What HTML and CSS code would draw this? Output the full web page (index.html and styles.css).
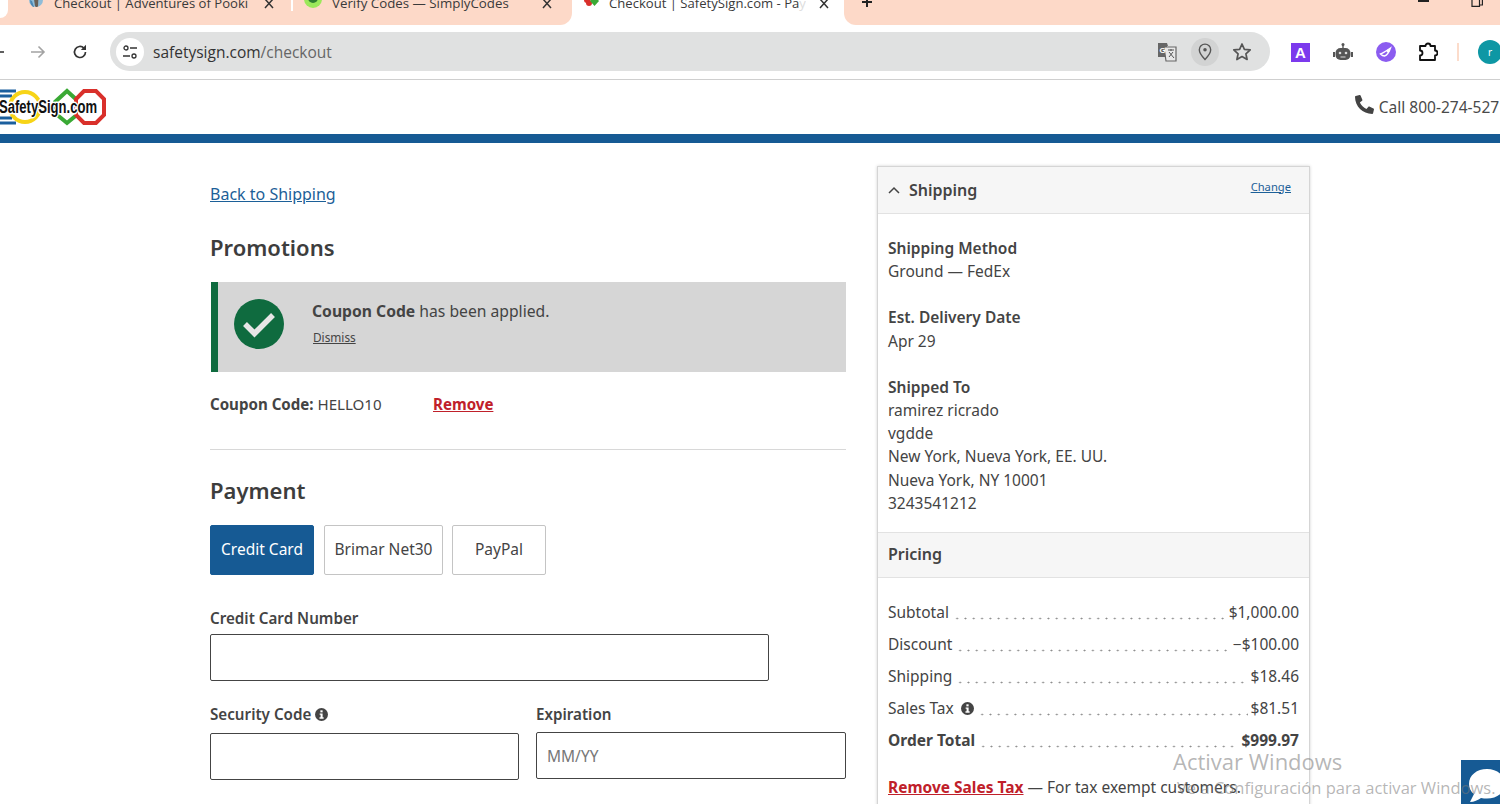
FILE: index.html
```html
<!DOCTYPE html>
<html lang="es">
<head>
<meta charset="utf-8">
<title>Checkout | SafetySign.com</title>
<link rel="stylesheet" href="styles.css">
</head>
<body>
<div class="tabstrip">
  <div class="tabgroup">
    <div class="tab tab-one">
      <svg class="fav" viewBox="0 0 16 16"><circle cx="8" cy="4" r="7" fill="#8fbcd8"/><path d="M5.500 0h5l-.5 10-.7 1H8l-1-1z" fill="#6a5f55"/><path d="M2 4c0 4 2 6 3 7h1L4 5z" fill="#4b87b3"/></svg>
      <span class="tab-title">Checkout | Adventures of Pooki</span>
      <svg class="tabx" viewBox="0 0 10 10"><path d="M1 0l8 9M9 0L1 9" stroke="#333" stroke-width="1.500"/></svg>
    </div>
    <i class="tabsep"></i>
    <div class="tab tab-two">
      <svg class="fav fav-big" viewBox="0 0 18 18"><circle cx="9" cy="4" r="9" fill="#9be85a"/><circle cx="9" cy="3" r="5" fill="#2e7d32"/><circle cx="9" cy="3" r="2" fill="#9be85a"/></svg>
      <span class="tab-title">Verify Codes — SimplyCodes</span>
      <svg class="tabx" viewBox="0 0 10 10"><path d="M1 0l8 9M9 0L1 9" stroke="#333" stroke-width="1.500"/></svg>
    </div>
  </div>
  <div class="tab tab-active">
    <svg class="fav" viewBox="0 0 16 16"><circle cx="4" cy="4" r="3" fill="#d9302b"/><circle cx="6" cy="7" r="3" fill="#d9302b"/><path d="M11.500 0l4.500 5-4.500 5L7 5z" fill="#3aa935"/></svg>
    <span class="tab-title">Checkout | SafetySign.com - Pa<span class="fade">y</span></span>
    <svg class="tabx" viewBox="0 0 10 10"><path d="M1 0l8 9M9 0L1 9" stroke="#333" stroke-width="1.500"/></svg>
  </div>
  <div class="tabrest">
    <svg class="newtab" viewBox="0 0 12 12"><path d="M6 0v10M1 5h10" stroke="#222" stroke-width="2"/></svg>
    <div class="winctl">
      <i class="minbar"></i>
      <svg class="restore" viewBox="0 0 12 7"><path d="M1 0v6.400h7.500V0M8.500 5H11.400V0" fill="none" stroke="#222" stroke-width="1.200"/></svg>
    </div>
  </div>
</div>

<div class="toolbar">
  <svg class="nav nav-back" viewBox="0 0 16 16"><path d="M0 8h14" stroke="#444" stroke-width="1.700"/></svg>
  <svg class="nav nav-fwd" viewBox="0 0 16 16"><path d="M1 8h13M8.500 2.500L14 8l-5.500 5.500" fill="none" stroke="#a3a3a3" stroke-width="1.600"/></svg>
  <svg class="nav nav-reload" viewBox="0 0 16 16"><path d="M13.500 8a5.500 5.500 0 1 1-1.600-3.900" fill="none" stroke="#333" stroke-width="1.700"/><path d="M14 .8v5.200H8.800z" fill="#333"/></svg>
  <div class="omnibox">
    <span class="site-info">
      <svg viewBox="0 0 16 16" width="16" height="16"><circle cx="4" cy="4" r="2" fill="none" stroke="#333" stroke-width="1.300"/><path d="M8 4h7M1 12h7" stroke="#333" stroke-width="1.300"/><circle cx="12" cy="12" r="2" fill="none" stroke="#333" stroke-width="1.300"/></svg>
    </span>
    <span class="url">safetysign.com<span class="url-path">/checkout</span></span>
    <span class="omni-icons">
      <svg class="ic-translate" viewBox="0 0 20 20"><path d="M1 1h9l1 3h-1v11H1z" fill="#666"/><path d="M7 5h12v14H9z" fill="#e8e8e8" stroke="#666" stroke-width="1.200"/><text x="2.500" y="11" class="ic-g">G</text><path d="M11 8h6M14 7v2M12 15l4-5M12 10l5 6" stroke="#555" fill="none"/></svg>
      <span class="pin-wrap"><svg viewBox="0 0 16 20" width="14" height="18"><path d="M8 1a6.500 6.500 0 0 0-6.500 6.500C1.500 12 8 18.500 8 18.500S14.500 12 14.500 7.500A6.500 6.500 0 0 0 8 1z" fill="none" stroke="#555" stroke-width="1.600"/><circle cx="8" cy="7.500" r="2" fill="#555"/></svg></span>
      <svg class="ic-star" viewBox="0 0 20 20"><path d="M10 2l2.400 5.300 5.800.6-4.300 3.900 1.200 5.700L10 14.600l-5.100 2.900 1.200-5.700L1.800 7.900l5.800-.6z" fill="none" stroke="#555" stroke-width="1.700" stroke-linejoin="round"/></svg>
    </span>
  </div>
  <div class="extensions">
    <span class="ext-a">A</span>
    <svg class="ext" viewBox="0 0 20 20"><circle cx="10" cy="2.500" r="1.500" fill="#555"/><path d="M9.300 3h1.400v3H9.300z" fill="#555"/><rect x="2.500" y="6" width="15" height="12" rx="5" fill="#555"/><rect x="0" y="10" width="2" height="5" fill="#555"/><rect x="18" y="10" width="2" height="5" fill="#555"/><circle cx="7" cy="11" r="1.300" fill="#ddd"/><circle cx="13" cy="11" r="1.300" fill="#ddd"/><path d="M7.500 15h5" stroke="#ddd"/></svg>
    <svg class="ext" viewBox="0 0 20 20"><circle cx="10" cy="10" r="10" fill="#8b5cf0"/><path d="M4.500 12c3-1 7-4 10-6-1 3-3 7-6 8-2 0-3-1-4-2z" fill="none" stroke="#fff" stroke-width="1.400"/><circle cx="12" cy="9" r="1.500" fill="#fff"/></svg>
    <svg class="ext ext-puzzle" viewBox="0 0 20 20"><path d="M2 4h5.500a2.500 2.500 0 0 1 5 0H17v4.500a2.500 2.500 0 0 1 0 5V18H2v-4.500a2.500 2.500 0 0 0 0-5z" fill="none" stroke="#111" stroke-width="1.800" stroke-linejoin="round"/></svg>
    <i class="ext-sep"></i>
    <span class="avatar">r</span>
  </div>
</div>

<header class="site-header">
  <svg class="logo" viewBox="0 0 110 36" width="110" height="36">
    <path d="M-4 2h20M-4 7h16M-4 29h16M-4 34h20" stroke="#1b5f9e" stroke-width="3"/>
    <circle cx="25" cy="18" r="15" fill="#fff" stroke="#f7d417" stroke-width="4"/>
    <path d="M67 2L79 13V24L67 34L55 24V13Z" fill="#fff" stroke="#3aa935" stroke-width="4"/>
    <path d="M84 2h12l8 8v16l-8 8H84l-8-8V10z" fill="#fff" stroke="#d9302b" stroke-width="4"/>
    <text x="-1" y="23.500" class="logo-text" textLength="98" lengthAdjust="spacingAndGlyphs">SafetySign.com</text>
  </svg>
  <div class="call">
    <svg class="phone" viewBox="0 0 512 512" width="19" height="19"><path d="M493 24L389 0c-11-3-23 3-27 14l-48 112c-4 10-1 21 7 28l60 49c-36 77-99 140-177 177l-49-60c-7-8-18-11-28-7L15 361c-11 5-17 16-14 28l24 104c2 11 12 19 23 19 256 0 464-207 464-464 0-11-8-21-19-24z" fill="#444"/></svg>
    <span>Call 800-274-5271</span>
  </div>
</header>
<div class="blue-rule"></div>

<main class="checkout">
  <section class="main-col">
    <a class="back-link" href="#">Back to Shipping</a>
    <h2 class="section-title promo-title">Promotions</h2>
    <div class="alert">
      <svg class="alert-icon" viewBox="0 0 50 50" width="50" height="50"><circle cx="25" cy="25" r="25" fill="#0f6b3f"/><path d="M11 25l9.500 9.500L39 16" fill="none" stroke="#e6e6e6" stroke-width="5.500"/></svg>
      <div class="alert-body">
        <p class="alert-text"><b>Coupon Code</b> has been applied.</p>
        <a class="dismiss" href="#">Dismiss</a>
      </div>
    </div>
    <div class="coupon-row">
      <span class="coupon-value"><b>Coupon Code:</b> HELLO10</span>
      <a class="remove-link" href="#">Remove</a>
    </div>
    <hr class="divider">
    <h2 class="section-title pay-title">Payment</h2>
    <div class="pay-tabs">
      <button class="pay-btn pay-active">Credit Card</button>
      <button class="pay-btn pay-net">Brimar Net30</button>
      <button class="pay-btn pay-paypal">PayPal</button>
    </div>
    <label class="field-label card-label">Credit Card Number</label>
    <input class="field card-field" type="text">
    <div class="two-col">
      <div class="sec-col">
        <label class="field-label">Security Code <svg class="info" viewBox="0 0 14 14" width="13" height="13"><circle cx="7" cy="7" r="7" fill="#444"/><rect x="5.800" y="2.500" width="2.400" height="2.200" fill="#fff"/><path d="M5 6h3.200v4H9.300v1.500H4.800V10H6V7.400H5z" fill="#fff"/></svg></label>
        <input class="field sec-field" type="text">
      </div>
      <div class="exp-col">
        <label class="field-label">Expiration</label>
        <input class="field exp-field" type="text" placeholder="MM/YY">
      </div>
    </div>
  </section>

  <aside class="summary">
    <div class="panel-head ship-head">
      <svg class="chev" viewBox="0 0 12 8" width="12" height="8"><path d="M1 7l5-5 5 5" fill="none" stroke="#444" stroke-width="1.500"/></svg>
      <h3 class="panel-title">Shipping</h3>
      <a class="change" href="#">Change</a>
    </div>
    <div class="ship-body">
      <div class="ship-block"><b>Shipping Method</b><br>Ground — FedEx</div>
      <div class="ship-block"><b>Est. Delivery Date</b><br>Apr 29</div>
      <div class="ship-block"><b>Shipped To</b><br>ramirez ricrado<br>vgdde<br>New York, Nueva York, EE. UU.<br>Nueva York, NY 10001<br>3243541212</div>
    </div>
    <div class="panel-head price-head"><h3 class="panel-title">Pricing</h3></div>
    <div class="price-body">
      <div class="price-row"><span>Subtotal</span><i class="dots"></i><span>$1,000.00</span></div>
      <div class="price-row"><span>Discount</span><i class="dots"></i><span>−$100.00</span></div>
      <div class="price-row"><span>Shipping</span><i class="dots"></i><span>$18.46</span></div>
      <div class="price-row"><span class="tax-label">Sales Tax <svg class="info" viewBox="0 0 14 14" width="13" height="13"><circle cx="7" cy="7" r="7" fill="#444"/><rect x="5.800" y="2.500" width="2.400" height="2.200" fill="#fff"/><path d="M5 6h3.200v4H9.300v1.500H4.800V10H6V7.400H5z" fill="#fff"/></svg></span><i class="dots"></i><span>$81.51</span></div>
      <div class="price-row price-total"><span>Order Total</span><i class="dots"></i><span>$999.97</span></div>
      <p class="tax-note"><a class="remove-link" href="#">Remove Sales Tax</a> — For tax exempt customers.</p>
    </div>
  </aside>
</main>

<div class="chat-widget">
  <svg viewBox="0 0 40 44" width="40" height="44"><path d="M26 9C16 9 8 15 8 24c0 4 2 8 5 10l-4 8c4 0 8-2 11-4 2 .5 4 .6 6 .6 10 0 18-6 18-14.600S36 9 26 9z" fill="#fff"/></svg>
</div>
<div class="watermark">
  <div class="wm-title">Activar Windows</div>
  <div class="wm-sub">Ve a Configuración para activar Windows.</div>
</div>
</body>
</html>
```

FILE: styles.css
```css
* { box-sizing: border-box; }
html, body { margin: 0; padding: 0; height: 804px; overflow: hidden; background: #fff; }
body { font-family: "Noto Sans", "Open Sans", sans-serif; color: #444; font-size: 15.500px; position: relative; }
a { color: inherit; }
h2, h3, p { margin: 0; }

/* browser chrome */
.tabstrip { display: flex; height: 25px; background: #fff; overflow: hidden; }
.tabgroup { display: flex; width: 572px; background: #fdd9c8; border-radius: 0 0 12px 0; position: relative; }
.tabgroup::before { content: ""; width: 8px; height: 18px; background: #fff; border-radius: 0 0 8px 0; flex: none; }
.tab { display: flex; align-items: flex-start; font: 13.100px "Open Sans", sans-serif; color: #3a3a3a; height: 25px; flex: none; }
.tab-one { width: 283px; padding-left: 20px; }
.tab-two { width: 279px; padding-left: 11px; font-size: 13.300px; }
.tabsep { width: 2px; height: 11px; background: #fff; flex: none; }
.tab-active { width: 272px; padding-left: 11px; background: #fff; }
.tabrest { flex: 1; background: #fdd9c8; border-radius: 0 0 0 12px; display: flex; justify-content: space-between; position: relative; }
.fav { width: 16px; height: 16px; margin-top: -4px; flex: none; }
.fav-big { width: 18px; height: 18px; margin-top: -5px; }
.tab-title { margin: -6px 0 0 10px; line-height: 18px; white-space: nowrap; overflow: hidden; width: 200px; flex: none; }
.tab-one .tab-title { width: 197px; }
.tab-one .tabx { margin-left: 13px; }
.tab-active .tab-title { width: 197px; }
.tab-active .tabx { margin-left: 13px; }
.fade { color: #ddd; }
.tabx { width: 10px; height: 10px; margin: -1px 0 0 10px; flex: none; }
.newtab { width: 12px; height: 12px; margin: -3px 0 0 17px; flex: none; }
.winctl { display: flex; align-items: flex-start; gap: 42px; padding-right: 17px; }
.minbar { width: 11px; height: 2px; background: #222; display: block; }
.restore { width: 12px; height: 7px; }

.toolbar { display: flex; align-items: center; height: 55px; border-bottom: 1px solid #cfcfcf; background: #fff; }
.nav { width: 16px; height: 16px; flex: none; }
.nav-back { margin-left: -10px; }
.nav-fwd { margin-left: 24px; }
.nav-reload { margin-left: 26px; }
.omnibox { display: flex; align-items: center; width: 1160px; height: 39px; margin: -1px 0 0 22px; background: #e0e1e1; border-radius: 20px; padding-left: 6px; flex: none; }
.site-info { width: 28px; height: 28px; background: #fff; border-radius: 50%; display: flex; align-items: center; justify-content: center; flex: none; }
.url { font: 15.500px "Open Sans", sans-serif; color: #333; margin-left: 9px; flex: 1; }
.url-path { color: #666; }
.omni-icons { display: flex; align-items: center; padding-right: 18px; }
.ic-translate { width: 20px; height: 20px; }
.ic-g { font: bold 8px "Liberation Sans", sans-serif; fill: #fff; }
.pin-wrap { width: 28px; height: 28px; border-radius: 50%; background: #d2d3d3; display: flex; align-items: center; justify-content: center; margin: 0 13px 0 14px; }
.ic-star { width: 20px; height: 20px; }
.extensions { display: flex; align-items: center; margin-left: 21px; flex: none; }
.ext-a { width: 19px; height: 19px; background: #7c3aed; color: #fff; font: bold 15px/19px "Liberation Sans", sans-serif; text-align: center; }
.ext { width: 20px; height: 20px; margin-left: 23px; }
.ext-puzzle { margin-left: 22px; }
.ext-sep { width: 2px; height: 18px; background: #fcdccb; margin-left: 19px; }
.avatar { width: 24px; height: 24px; margin-left: 19px; border-radius: 50%; background: #0e97a4; color: #fff; font-size: 10px; line-height: 24px; text-align: center; flex: none; }

/* site header */
.site-header { display: flex; justify-content: space-between; align-items: center; height: 54px; overflow: hidden; }
.logo { flex: none; overflow: visible; }
.logo-text { font: bold 18px "Liberation Sans", sans-serif; fill: #111; stroke: #fff; stroke-width: 3px; paint-order: stroke; stroke-linejoin: round; }
.call { display: flex; align-items: center; gap: 5px; font-size: 15.500px; margin-right: -8px; white-space: nowrap; flex: none; color: #4a4a4a; }
.phone { margin-top: -6px; transform: scaleX(-1); }
.blue-rule { height: 9px; background: #165a94; }

/* layout */
.checkout { display: flex; padding: 23px 0 0 210px; align-items: flex-start; }
.main-col { width: 636px; flex: none; padding-top: 17px; }
.back-link { color: #1c6098; font-size: 16px; line-height: 22px; display: block; width: max-content; }
.section-title { font-size: 22px; font-weight: 600; color: #3d3d3d; line-height: 30px; }
.promo-title { margin-top: 27px; }

.alert { display: flex; height: 90px; margin: 20px 0 0 1px; background: #d6d6d6; border-left: 7px solid #0f6b3f; padding-left: 16px; align-items: flex-start; }
.alert-icon { margin-top: 17px; flex: none; }
.alert-body { margin-left: 28px; padding-top: 17px; }
.alert-text { font-size: 15.700px; line-height: 24px; }
.dismiss { display: block; font-size: 11.800px; line-height: 16px; margin: 6px 0 0 1px; }

.coupon-row { display: flex; margin-top: 20px; line-height: 24px; font-size: 15.100px; }
.coupon-value { width: 223px; }
.remove-link { color: #c0202a; font-weight: 700; }
.divider { border: 0; border-top: 1px solid #d8d8d8; margin: 33px 0 0; }
.pay-title { margin-top: 25px; }

.pay-tabs { display: flex; gap: 9px; margin-top: 20px; }
.pay-btn { height: 50px; border: 1px solid #c4c4c4; border-radius: 2px; background: #fff; color: #444; font: 15.500px "Noto Sans", sans-serif; padding: 0 0 3px; }
.pay-active { width: 104px; margin-right: 1px; background: #165a94; border-color: #165a94; color: #fff; }
.pay-net { width: 119px; }
.pay-paypal { width: 94px; }

.field-label { display: block; font-weight: 600; font-size: 15.200px; line-height: 20px; color: #444; }
.card-label { margin-top: 33px; }
.field { display: block; height: 47px; border: 1px solid #444; border-radius: 2px; background: #fff; padding: 0 10px; font: 15.500px "Noto Sans", sans-serif; margin-top: 6px; }
.field::placeholder { color: #777; }
.card-field { width: 559px; }
.two-col { display: flex; gap: 17px; margin-top: 23px; }
.sec-col { width: 309px; }
.exp-col { width: 310px; }
.sec-field { width: 309px; margin-top: 9px; }
.exp-field { width: 310px; margin-top: 8px; }
.info { vertical-align: -1px; }

/* summary */
.summary { width: 433px; margin-left: 31px; border: 1px solid #d5d5d5; box-shadow: 0 0 3px rgba(0,0,0,.18); flex: none; }
.panel-head { display: flex; align-items: center; background: #f6f6f6; padding-left: 10px; }
.ship-head { height: 47px; border-bottom: 1px solid #e2e2e2; }
.price-head { height: 46px; border-top: 1px solid #e2e2e2; border-bottom: 1px solid #e2e2e2; padding-bottom: 2px; }
.chev { margin-right: 9px; }
.panel-title { font-size: 16px; font-weight: 600; color: #444; }
.ship-head .panel-title { margin-top: -1px; }
.change { margin-left: auto; margin-right: 18px; font-size: 11.200px; color: #1c6098; margin-top: -8px; }
.ship-body { padding: 23px 10px 17px; line-height: 23.200px; font-size: 15.500px; }
.ship-block { margin-bottom: 23px; }
.ship-block:last-child { margin-bottom: 0; }
.ship-block b { font-weight: 600; }
.price-body { padding: 18px 10px 40px; }
.price-row { display: flex; align-items: baseline; height: 32px; line-height: 32px; white-space: nowrap; }
.dots { flex: 1; height: 3px; margin: 0 3px 0 4px; background: radial-gradient(circle, #8a8a8a 0.8px, transparent 1.100px) 0 0 / 8.300px 3px repeat-x; align-self: center; transform: translateY(6px); }
.tax-label .info { margin-left: 3px; }
.price-total { font-weight: 700; }
.tax-note { margin-top: 19px; line-height: 24px; white-space: nowrap; }

/* overlays */
.watermark { position: absolute; left: 1173px; top: 748px; color: rgba(120,120,120,.55); font-family: "Open Sans", sans-serif; white-space: nowrap; }
.wm-title { font-size: 22px; line-height: 26px; }
.wm-sub { font-size: 16.550px; line-height: 24px; margin-top: 2px; margin-left: 4px; }
.chat-widget { position: absolute; left: 1461px; top: 760px; width: 39px; height: 44px; background: #165a94; overflow: hidden; }
```
